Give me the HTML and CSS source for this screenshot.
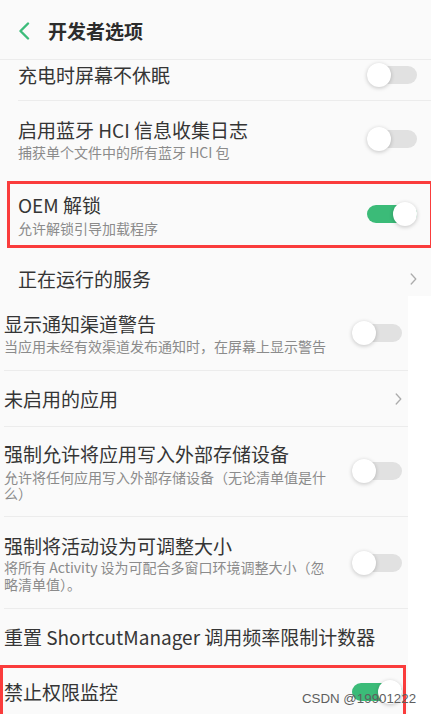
FILE: index.html
```html
<!DOCTYPE html>
<html lang="zh-CN">
<head>
<meta charset="utf-8">
<title>开发者选项</title>
<link rel="stylesheet" href="styles.css">
</head>
<body>
<div class="page">
  <section class="screen top">
    <header class="appbar">
      <svg class="back" width="12" height="18" viewBox="0 0 12 18"><polyline points="10,1.5 2.5,9 10,16.5" fill="none" stroke="#3cbc7a" stroke-width="2.4" stroke-linecap="round" stroke-linejoin="round"/></svg>
      <h1>开发者选项</h1>
    </header>

    <div class="row first">
      <div class="text"><div class="title">充电时屏幕不休眠</div></div>
      <span class="switch"></span>
    </div>

    <div class="row plain">
      <div class="text">
        <div class="title">启用蓝牙 HCI 信息收集日志</div>
        <div class="sub">捕获单个文件中的所有蓝牙 HCI 包</div>
      </div>
      <span class="switch"></span>
    </div>

    <div class="mark mark-top">
      <div class="row">
        <div class="text">
          <div class="title">OEM 解锁</div>
          <div class="sub">允许解锁引导加载程序</div>
        </div>
        <span class="switch on"></span>
      </div>
    </div>

    <div class="row link running">
      <div class="text"><div class="title">正在运行的服务</div></div>
      <svg class="chev" width="7" height="12" viewBox="0 0 7 12"><polyline points="1.2,1 5.8,6 1.2,11" fill="none" stroke="#acacac" stroke-width="1.3" stroke-linecap="round" stroke-linejoin="round"/></svg>
    </div>
  </section>

  <section class="screen bottom">
    <div class="row row-a">
      <div class="text">
        <div class="title">显示通知渠道警告</div>
        <div class="sub">当应用未经有效渠道发布通知时，在屏幕上显示警告</div>
      </div>
      <span class="switch"></span>
    </div>

    <div class="row link row-b">
      <div class="text"><div class="title">未启用的应用</div></div>
      <svg class="chev" width="7" height="12" viewBox="0 0 7 12"><polyline points="1.2,1 5.8,6 1.2,11" fill="none" stroke="#acacac" stroke-width="1.3" stroke-linecap="round" stroke-linejoin="round"/></svg>
    </div>

    <div class="row row-c">
      <div class="text">
        <div class="title">强制允许将应用写入外部存储设备</div>
        <div class="sub">允许将任何应用写入外部存储设备（无论清单值是什么）</div>
      </div>
      <span class="switch"></span>
    </div>

    <div class="row row-d">
      <div class="text">
        <div class="title">强制将活动设为可调整大小</div>
        <div class="sub">将所有 Activity 设为可配合多窗口环境调整大小（忽略清单值）。</div>
      </div>
      <span class="switch"></span>
    </div>

    <div class="row row-e">
      <div class="text"><div class="title nowrap">重置 ShortcutManager 调用频率限制计数器</div></div>
    </div>

    <div class="mark mark-bottom">
      <div class="row">
        <div class="text"><div class="title">禁止权限监控</div></div>
        <span class="switch on"></span>
      </div>
    </div>
  </section>

  <div class="watermark">CSDN @19901222</div>
</div>
</body>
</html>
```

FILE: styles.css
```css
* {
  box-sizing: border-box;
  margin: 0;
  padding: 0;
}

html,
body {
  width: 431px;
  height: 714px;
  overflow: hidden;
  background: #ffffff;
}

body {
  font-family: "Noto Sans CJK SC", "Noto Sans", sans-serif;
  color: #353535;
}

.page {
  position: relative;
  width: 431px;
  height: 714px;
  overflow: hidden;
}

.screen {
  background: #fafafa;
}

.screen.top {
  width: 431px;
  height: 296px;
}

.screen.bottom {
  width: 408px;
  height: 418px;
}

/* app bar */
.appbar {
  height: 60px;
  display: flex;
  align-items: center;
  padding: 3px 0 0 18px;
  border-bottom: 1px solid #ececec;
}

.back {
  flex: none;
  margin-right: 18px;
}

.appbar h1 {
  font-size: 19px;
  line-height: 26px;
  font-weight: 700;
  color: #2c2c2c;
}

/* rows */
.row {
  display: flex;
  align-items: center;
}

.text {
  flex: 1;
  min-width: 0;
}

.title {
  font-size: 19px;
  line-height: 26px;
}

.nowrap {
  white-space: nowrap;
}

.sub {
  font-size: 14px;
  line-height: 17px;
  color: #8b8b8b;
}

.top .row {
  margin-left: 18px;
  padding-right: 14px;
}

.bottom .row {
  margin-left: 4px;
  padding-right: 6px;
}

.bottom .text {
  max-width: 332px;
}

.row.first {
  padding-top: 1px;
  padding-bottom: 11px;
  border-bottom: 1px solid #ececec;
}

.row.first .title {
  line-height: 28px;
}

.row.plain {
  padding-top: 16px;
  padding-bottom: 20px;
}

.row.plain .sub {
  margin-top: 1px;
}

.row.running {
  padding-top: 18px;
  padding-bottom: 5px;
}

.chev {
  flex: none;
  margin-left: auto;
}

/* red highlight boxes */
.mark {
  border: 3px solid #fa3c3c;
}

.mark-top {
  height: 67px;
  margin-left: 7px;
  margin-right: -2px;
}

.top .mark-top .row {
  margin-left: 8px;
  padding-top: 7.5px;
  padding-right: 13px;
}

.mark-top .sub {
  margin-top: 2px;
}

.mark-bottom {
  width: 406px;
  height: 60px;
}

.bottom .mark-bottom .row {
  margin-left: 1px;
  padding-top: 11px;
  padding-right: 1px;
}

/* bottom rows */
.row-a {
  padding-top: 14.5px;
  padding-bottom: 15px;
  border-bottom: 1px solid #ececec;
}

.row-a .sub {
  margin-top: 1.5px;
}

.row-b {
  height: 56px;
  border-bottom: 1px solid #ececec;
}

.row-c {
  padding-top: 13.5px;
  padding-bottom: 15.5px;
  border-bottom: 1px solid #ececec;
}

.row-c .sub {
  margin-top: 2px;
  line-height: 16px;
}

.row-d {
  padding-top: 15.5px;
  padding-bottom: 14.5px;
  border-bottom: 1px solid #ececec;
}

.row-d .sub {
  margin-top: 0.5px;
}

.row-e {
  height: 56.5px;
}

/* switch */
.switch {
  position: relative;
  flex: none;
  width: 50px;
  height: 24px;
  margin-left: auto;
}

.switch::before {
  content: "";
  position: absolute;
  left: 0;
  right: 0;
  top: 3px;
  height: 18px;
  border-radius: 9px;
  background: #e1e1e1;
}

.switch::after {
  content: "";
  position: absolute;
  top: 0;
  left: 0;
  width: 24px;
  height: 24px;
  border-radius: 50%;
  background: #ffffff;
  box-shadow: 0 1px 4px rgba(0, 0, 0, 0.22);
}

.switch.on::before {
  background: #3bbb78;
}

.switch.on::after {
  left: auto;
  right: 0;
}

/* watermark overlay */
.watermark {
  position: absolute;
  left: 302px;
  top: 690px;
  font-family: "Liberation Sans", Arial, sans-serif;
  font-size: 13.3px;
  line-height: 17px;
  color: #5e5e5e;
  white-space: nowrap;
}
```
